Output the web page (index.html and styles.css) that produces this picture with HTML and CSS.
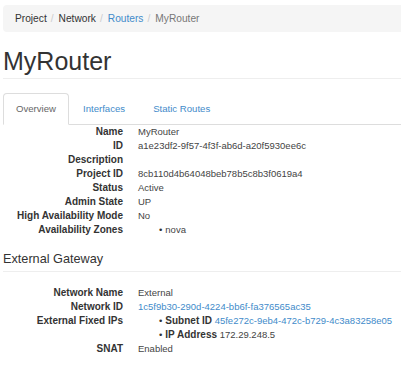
FILE: index.html
```html
<!DOCTYPE html>
<html lang="en">
<head>
    <meta charset="UTF-8">
    <title>MyRouter</title>
    <link rel="stylesheet" href="styles.css">
</head>
<body class="body">
    <ol class="breadcrumb">
        <li>Project</li>
        <li>Network</li>
        <li><a href="#">Routers</a></li>
        <li class="active">MyRouter</li>
    </ol>
    <div class="page-header">
        <h1>MyRouter</h1>
    </div>
    <ul class="nav-tabs">
        <li class="tab active">Overview</li>
        <li class="tab"><a href="#">Interfaces</a></li>
        <li class="tab"><a href="#">Static Routes</a></li>
    </ul>
    <dl class="detail">
        <dt>Name</dt>
        <dd>MyRouter</dd>
        <dt>ID</dt>
        <dd>a1e23df2-9f57-4f3f-ab6d-a20f5930ee6c</dd>
        <dt>Description</dt>
        <dd></dd>
        <dt>Project ID</dt>
        <dd>8cb110d4b64048beb78b5c8b3f0619a4</dd>
        <dt>Status</dt>
        <dd>Active</dd>
        <dt>Admin State</dt>
        <dd>UP</dd>
        <dt>High Availability Mode</dt>
        <dd>No</dd>
        <dt>Availability Zones</dt>
        <dd>
            <ul class="bullets">
                <li>nova</li>
            </ul>
        </dd>
    </dl>
    <h4 class="section">External Gateway</h4>
    <dl class="detail">
        <dt>Network Name</dt>
        <dd>External</dd>
        <dt>Network ID</dt>
        <dd><a href="#">1c5f9b30-290d-4224-bb6f-fa376565ac35</a></dd>
        <dt>External Fixed IPs</dt>
        <dd>
            <ul class="bullets">
                <li><strong>Subnet ID</strong> <a href="#">45fe272c-9eb4-472c-b729-4c3a83258e05</a></li>
                <li><strong>IP Address</strong> 172.29.248.5</li>
            </ul>
        </dd>
        <dt>SNAT</dt>
        <dd>Enabled</dd>
    </dl>
</body>
</html>
```

FILE: styles.css
```css
.body {
    margin: 0;
    padding: 5px 0 0 3px;
    font-family: 'Liberation Sans', Arial, sans-serif;
    font-size: 10px;
    line-height: 14px;
    color: #333;
    overflow: hidden;
}

a {
    color: #428bca;
    text-decoration: none;
}

.breadcrumb {
    display: flex;
    margin: 0;
    padding: 6px 12px;
    height: 15px;
    line-height: 15px;
    list-style: none;
    background-color: #f5f5f5;
    border-radius: 4px 0 0 4px;
    font-size: 10.2px;
}

.breadcrumb li + li::before {
    content: "/";
    padding: 0 5px 0 4px;
    color: #ccc;
}

.breadcrumb .active {
    color: #777;
}

.page-header {
    margin: 14px 0 14px;
    padding-bottom: 2px;
    border-bottom: 1px solid #eee;
}

.page-header h1 {
    margin: 0;
    font-size: 25px;
    line-height: 30px;
    font-weight: 400;
    color: #333;
}

.nav-tabs {
    display: flex;
    margin: 0;
    padding: 0;
    list-style: none;
    border-bottom: 1px solid #ddd;
}

.tab {
    margin-bottom: -1px;
    padding: 9px 13px;
    line-height: 12px;
    border: 1px solid transparent;
    border-radius: 4px 4px 0 0;
    font-size: 9.6px;
}

.tab.active {
    padding: 9px 12px;
    color: #666;
    border-color: #ddd #ddd transparent;
    background: #fff;
}

.detail {
    display: grid;
    grid-template-columns: 120px 1fr;
    column-gap: 15px;
    margin: 0;
}

.detail dt {
    font-weight: 700;
    text-align: right;
    white-space: nowrap;
    min-height: 14px;
}

.detail dd {
    margin: 0;
    min-height: 14px;
    white-space: nowrap;
    font-size: 9.5px;
    color: #444;
}

.bullets {
    margin: 0;
    padding-left: 29px;
    list-style: none;
}

.bullets li::before {
    content: "\2022";
    margin-left: -8px;
    margin-right: 3px;
    color: #333;
}

.bullets strong {
    font-size: 10px;
    color: #333;
}

.section {
    margin: 14px 0 14px;
    padding-bottom: 4px;
    border-bottom: 1px solid #eee;
    font-size: 12.7px;
    font-weight: 400;
    line-height: 16px;
}
```
